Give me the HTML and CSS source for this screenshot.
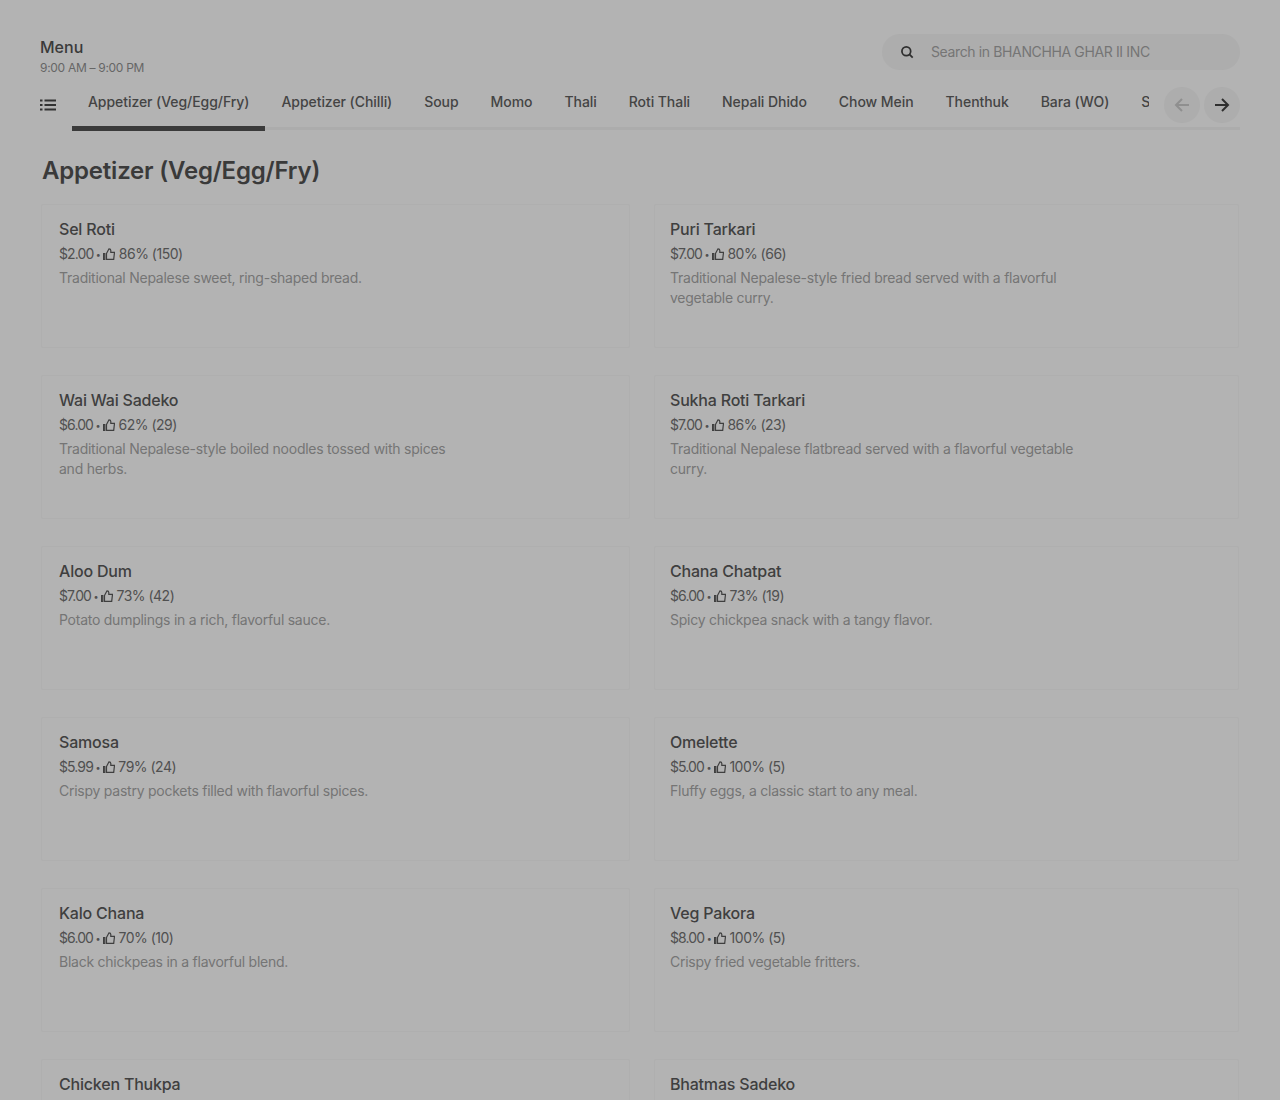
FILE: index.html
```html
<!DOCTYPE html>
<html lang="en">
<head>
<meta charset="utf-8">
<title>Menu</title>
<link rel="stylesheet" href="styles.css">
</head>
<body>
<main class="page">
  <header class="top">
    <div class="hours">
      <h2 class="menu-title">Menu</h2>
      <div class="menu-time">9:00 AM – 9:00 PM</div>
    </div>
    <label class="search">
      <svg class="search-icon" viewBox="0 0 16 16" width="14" height="14"><circle cx="7.2" cy="7.2" r="5" fill="none" stroke="#2f2f2f" stroke-width="2"/><path d="M10.5 10.5l4 4" stroke="#2f2f2f" stroke-width="2" fill="none"/></svg>
      <span class="search-text">Search in BHANCHHA GHAR II INC</span>
    </label>
  </header>
  <nav class="tabs">
    <svg class="list-icon" viewBox="0 0 16 14" width="16" height="14"><path d="M0 1.500h2.500v2H0zM0 6h2.500v2H0zM0 10.500h2.500v2H0zM4.500 1.500H16v2H4.500zM4.500 6H16v2H4.500zM4.500 10.500H16v2H4.500z" fill="#333"/></svg>
    <div class="tab-strip">
      <a class="tab active">Appetizer (Veg/Egg/Fry)</a>
      <a class="tab">Appetizer (Chilli)</a>
      <a class="tab">Soup</a>
      <a class="tab">Momo</a>
      <a class="tab">Thali</a>
      <a class="tab">Roti Thali</a>
      <a class="tab">Nepali Dhido</a>
      <a class="tab">Chow Mein</a>
      <a class="tab">Thenthuk</a>
      <a class="tab">Bara (WO)</a>
      <a class="tab">Sides</a>
    </div>
    <div class="arrows">
      <span class="arrow disabled"><svg viewBox="0 0 16 16" width="16" height="16"><path d="M15 8H2M8 2L2 8l6 6" fill="none" stroke="#8f8f8f" stroke-width="2"/></svg></span>
      <span class="arrow"><svg viewBox="0 0 16 16" width="16" height="16"><path d="M1 8h13M8 2l6 6-6 6" fill="none" stroke="#2f2f2f" stroke-width="2"/></svg></span>
    </div>
  </nav>
  <h1 class="section-title">Appetizer (Veg/Egg/Fry)</h1>
  <section class="grid">
    <article class="card"><h3 class="name">Sel Roti</h3><p class="meta"><span class="price">$2.00</span><span class="dot">•</span><svg class="thumb" viewBox="0 0 12 12"><use href="#t"/></svg> 86% (150)</p><p class="desc">Traditional Nepalese sweet, ring-shaped bread.</p></article>
    <article class="card"><h3 class="name">Puri Tarkari</h3><p class="meta"><span class="price">$7.00</span><span class="dot">•</span><svg class="thumb" viewBox="0 0 12 12"><use href="#t"/></svg> 80% (66)</p><p class="desc">Traditional Nepalese-style fried bread served with a flavorful vegetable curry.</p></article>
    <article class="card"><h3 class="name">Wai Wai Sadeko</h3><p class="meta"><span class="price">$6.00</span><span class="dot">•</span><svg class="thumb" viewBox="0 0 12 12"><use href="#t"/></svg> 62% (29)</p><p class="desc">Traditional Nepalese-style boiled noodles tossed with spices and herbs.</p></article>
    <article class="card"><h3 class="name">Sukha Roti Tarkari</h3><p class="meta"><span class="price">$7.00</span><span class="dot">•</span><svg class="thumb" viewBox="0 0 12 12"><use href="#t"/></svg> 86% (23)</p><p class="desc">Traditional Nepalese flatbread served with a flavorful vegetable curry.</p></article>
    <article class="card"><h3 class="name">Aloo Dum</h3><p class="meta"><span class="price">$7.00</span><span class="dot">•</span><svg class="thumb" viewBox="0 0 12 12"><use href="#t"/></svg> 73% (42)</p><p class="desc">Potato dumplings in a rich, flavorful sauce.</p></article>
    <article class="card"><h3 class="name">Chana Chatpat</h3><p class="meta"><span class="price">$6.00</span><span class="dot">•</span><svg class="thumb" viewBox="0 0 12 12"><use href="#t"/></svg> 73% (19)</p><p class="desc">Spicy chickpea snack with a tangy flavor.</p></article>
    <article class="card"><h3 class="name">Samosa</h3><p class="meta"><span class="price">$5.99</span><span class="dot">•</span><svg class="thumb" viewBox="0 0 12 12"><use href="#t"/></svg> 79% (24)</p><p class="desc">Crispy pastry pockets filled with flavorful spices.</p></article>
    <article class="card"><h3 class="name">Omelette</h3><p class="meta"><span class="price">$5.00</span><span class="dot">•</span><svg class="thumb" viewBox="0 0 12 12"><use href="#t"/></svg> 100% (5)</p><p class="desc">Fluffy eggs, a classic start to any meal.</p></article>
    <article class="card"><h3 class="name">Kalo Chana</h3><p class="meta"><span class="price">$6.00</span><span class="dot">•</span><svg class="thumb" viewBox="0 0 12 12"><use href="#t"/></svg> 70% (10)</p><p class="desc">Black chickpeas in a flavorful blend.</p></article>
    <article class="card"><h3 class="name">Veg Pakora</h3><p class="meta"><span class="price">$8.00</span><span class="dot">•</span><svg class="thumb" viewBox="0 0 12 12"><use href="#t"/></svg> 100% (5)</p><p class="desc">Crispy fried vegetable fritters.</p></article>
    <article class="card"><h3 class="name">Chicken Thukpa</h3></article>
    <article class="card"><h3 class="name">Bhatmas Sadeko</h3></article>
  </section>
</main>
<svg class="defs" width="0" height="0"><symbol id="t" viewBox="0 0 12 12"><path d="M0.500 5.500h1.300v6H0.500zM3.500 5.500L6 0.800c1 0 1.800.7 1.800 1.700V4.300h3.700l-.8 7H3.500z" fill="none" stroke="#3f3f3f" stroke-width="1.200"/></symbol></svg>
</body>
</html>
```
FILE: styles.css
```css
* { box-sizing: border-box; }
html, body { margin: 0; height: 1100px; overflow: hidden; background: #b3b3b3; }
body { font-family: Inter, "Liberation Sans", sans-serif; color: #3a3a3a; }
.page { padding: 36px 40px 0; }
.top { display: flex; justify-content: space-between; align-items: flex-start; height: 48px; }
.menu-title { margin: 0; font-size: 16px; line-height: 22px; font-weight: 500; color: #3a3a3a; }
.menu-time { font-size: 12px; line-height: 20px; color: #666; letter-spacing: -0.3px; }
.search { display: flex; align-items: center; width: 358px; height: 36px; margin-top: -2px; padding-left: 18px; gap: 17px; border-radius: 18px; background: #adadad; }
.search-icon { flex: none; }
.search-text { font-size: 14px; line-height: 36px; color: #757575; letter-spacing: -0.37px; }
.tabs { position: relative; display: flex; height: 47px; }
.list-icon { flex: none; margin-top: 14px; }
.tab-strip { display: flex; flex: 1; margin-left: 16px; overflow: hidden; }
.tabs::after { content: ""; position: absolute; left: 32px; right: 0; top: 43px; height: 3px; background: #acacac; }
.tab { flex: none; padding: 9px 16px 0; height: 47px; font-size: 14px; line-height: 18px; font-weight: 500; color: #444; white-space: nowrap; letter-spacing: -0.06px; border-bottom: 5px solid transparent; position: relative; z-index: 1; }
.tab.active { border-bottom-color: #3a3a3a; }
.arrows { position: absolute; right: 0; top: 0; width: 91px; height: 42px; display: flex; justify-content: flex-end; gap: 4px; background: #b3b3b3; z-index: 2; }
.arrow { width: 36px; height: 36px; margin-top: 3px; border-radius: 50%; background: #adadad; display: flex; align-items: center; justify-content: center; }
.section-title { margin: 24px 0 17px 2px; font-size: 24px; line-height: 32px; font-weight: 600; color: #3a3a3a; letter-spacing: -0.2px; }
.grid { display: grid; grid-template-columns: 589px 585px; column-gap: 24px; row-gap: 27px; margin-left: 1px; }
.card { height: 144px; padding: 14px 17px; border: 1px solid #afafaf; border-radius: 2px; }
.card:nth-child(even) { padding-left: 15px; }
.name { margin: 0; font-size: 16px; line-height: 20px; font-weight: 500; color: #3f3f3f; letter-spacing: -0.2px; }
.meta { display: block; height: 20px; margin: 5px 0 0; font-size: 14px; line-height: 20px; color: #505050; letter-spacing: -0.5px; }
.price { letter-spacing: -0.9px; }
.dot { display: inline-block; width: 10px; text-align: center; font-size: 9px; line-height: 1; letter-spacing: 0; vertical-align: 1px; }
.thumb { width: 12px; height: 12px; vertical-align: -1px; }
.desc { margin: 4px 0 0; max-width: 410px; font-size: 14px; line-height: 20px; color: #757575; letter-spacing: -0.25px; }
.defs { position: absolute; }
```
